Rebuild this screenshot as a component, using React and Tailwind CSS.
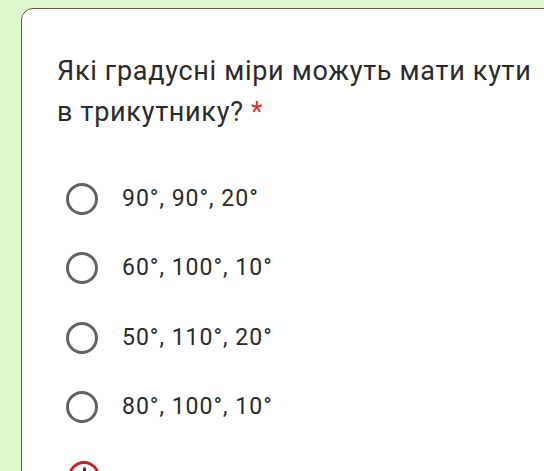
export default function App() {
  const options = ['90°, 90°, 20°', '60°, 100°, 10°', '50°, 110°, 20°', '80°, 100°, 10°'];

  return (
    <div
      className="w-[544px] h-[471px] overflow-hidden bg-[#ddf7cf] pt-[8px] pl-[21px]"
      style={{ fontFamily: 'Roboto, "Liberation Sans", sans-serif' }}
    >
      <div className="w-[600px] h-[520px] bg-white border border-[#7a4f42] rounded-tl-[12px] pl-[35px] pt-[42px]">
        <h1 className="text-[27px] leading-[41px] text-[#2a2a2a] font-normal tracking-[0.7px]">
          Які градусні міри можуть мати кути
          <br />
          в трикутнику? <span className="text-[#d93025]">*</span>
        </h1>

        <div className="mt-[31px] flex flex-col">
          {options.map((opt) => (
            <div key={opt} className="h-[69.5px] flex items-center">
              <div className="ml-[9px] w-[32px] h-[32px] rounded-full border-[3px] border-[#5f6368]"></div>
              <span className="ml-[24px] text-[23px] tracking-[1px] text-[#2a2a2a]">{opt}</span>
            </div>
          ))}
          <div className="h-[69.5px] flex items-start pt-[19px]">
            <div className="ml-[11px] w-[32px] h-[32px] rounded-full border-[3px] border-[#c5221f] flex justify-center pt-[3px]">
              <div className="w-[3px] h-[6px] bg-[#3c4043] rounded-full"></div>
            </div>
          </div>
        </div>
      </div>
    </div>
  );
}
